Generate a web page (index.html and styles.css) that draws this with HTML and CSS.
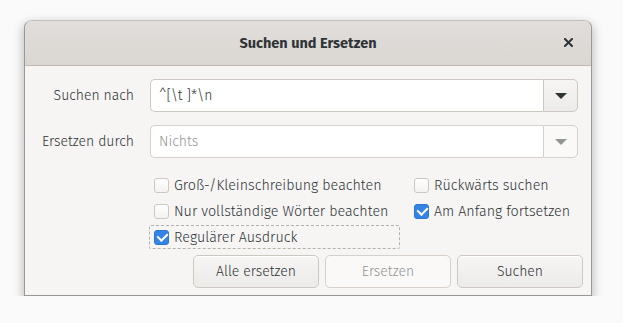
FILE: index.html
```html
<!DOCTYPE html>
<html lang="de">
<head>
  <meta charset="UTF-8">
  <title>Suchen und Ersetzen</title>
  <link rel="stylesheet" href="styles.css">
</head>
<body>
  <div class="dialog">
    <header class="titlebar">
      <h1>Suchen und Ersetzen</h1>
      <button class="close-btn" aria-label="Schließen">
        <svg width="9" height="9" viewBox="0 0 9 9"><path d="M1 1L8 8M8 1L1 8" stroke="#2e3436" stroke-width="2" stroke-linecap="square"/></svg>
      </button>
    </header>

    <div class="content">
      <div class="fields">
        <label class="field-label">Suchen nach</label>
        <div class="combo">
          <input type="text" value="^[\t ]*\n">
          <button class="combo-btn">
            <svg width="12" height="6" viewBox="0 0 12 6"><path d="M0 0H12L6 6Z" fill="#2e3436"/></svg>
          </button>
        </div>

        <label class="field-label">Ersetzen durch</label>
        <div class="combo disabled">
          <input type="text" placeholder="Nichts" disabled>
          <button class="combo-btn" disabled>
            <svg width="12" height="6" viewBox="0 0 12 6"><path d="M0 0H12L6 6Z" fill="#929595"/></svg>
          </button>
        </div>
      </div>

      <div class="options">
        <label class="check"><span class="box"></span>Groß-/Kleinschreibung beachten</label>
        <label class="check"><span class="box"></span>Rückwärts suchen</label>
        <label class="check"><span class="box"></span>Nur vollständige Wörter beachten</label>
        <label class="check"><span class="box checked"></span>Am Anfang fortsetzen</label>
        <label class="check focused"><span class="box checked"></span>Regulärer Ausdruck</label>
      </div>

      <div class="actions">
        <button class="btn">Alle ersetzen</button>
        <button class="btn" disabled>Ersetzen</button>
        <button class="btn">Suchen</button>
      </div>
    </div>
  </div>
</body>
</html>
```

FILE: styles.css
```css
* {
  margin: 0;
  padding: 0;
  box-sizing: border-box;
  font-family: 'Fira Sans', 'Noto Sans', sans-serif;
  font-weight: 350;
}

body {
  background-color: #fafafa;
  color: #2e3436;
  font-size: 14px;
}

.dialog {
  margin: 20px 0 0 24px;
  width: 568px;
  height: 276px;
  background-color: #f6f5f4;
  border: 1px solid #9a9896;
  border-top-color: #c4c0bc;
  border-radius: 8px 8px 0 0;
  box-shadow: 0 4px 10px 2px rgba(0, 0, 0, 0.22);
  display: flex;
  flex-direction: column;
}

.titlebar {
  height: 45px;
  flex-shrink: 0;
  background: linear-gradient(#e1dedb, #dad6d2);
  border-bottom: 1px solid #bfb8b1;
  border-radius: 7px 7px 0 0;
  display: flex;
  align-items: center;
  justify-content: center;
  position: relative;
}

.titlebar h1 {
  font-size: 14.5px;
  font-weight: 700;
  color: #2e3436;
}

.close-btn {
  position: absolute;
  right: 18px;
  top: 17px;
  border: none;
  background: none;
  display: flex;
}

.content {
  padding: 13px 8px 0 12px;
  display: flex;
  flex-direction: column;
}

.fields {
  display: grid;
  grid-template-columns: 97px 1fr;
  column-gap: 16px;
  row-gap: 13px;
  margin-right: 5px;
}

.field-label {
  text-align: right;
  align-self: center;
  white-space: nowrap;
}

.combo {
  display: flex;
  height: 33px;
}

.combo input {
  flex: 1;
  min-width: 0;
  border: 1px solid #cdc7c2;
  border-right: none;
  border-radius: 5px 0 0 5px;
  background: #fff;
  padding: 0 8px;
  font-size: 14px;
  color: #2e3436;
  outline: none;
}

.combo input::placeholder {
  color: #929595;
}

.combo-btn {
  width: 35px;
  border: 1px solid #cdc7c2;
  border-radius: 0 5px 5px 0;
  background: linear-gradient(#f6f5f4, #edebe9);
  display: flex;
  align-items: center;
  justify-content: center;
}

.combo.disabled .combo-btn {
  background: #faf9f8;
  border-color: #d5d0cc;
}

.combo.disabled input {
  border-color: #d5d0cc;
}

.options {
  display: grid;
  grid-template-columns: 260px auto;
  row-gap: 2px;
  margin: 15px 0 0 112px;
}

.check {
  display: flex;
  align-items: center;
  gap: 5px;
  height: 24px;
  padding: 0 4px;
  font-size: 14.3px;
  white-space: nowrap;
  border: 1px solid transparent;
}

.check.focused {
  border: 1px dashed #b4b0ac;
  border-radius: 2px;
  width: 251px;
}

.box {
  width: 15px;
  height: 15px;
  border: 1px solid #cdc7c2;
  border-radius: 3px;
  background: linear-gradient(#ffffff, #f4f2f1);
  flex-shrink: 0;
  position: relative;
}

.box.checked {
  background: #3584e4;
  border-color: #2a76d6;
}

.box.checked::after {
  content: '';
  position: absolute;
  left: 3.5px;
  top: 0.5px;
  width: 5px;
  height: 8px;
  border: solid #fff;
  border-width: 0 2.5px 2.5px 0;
  transform: rotate(45deg);
}

.actions {
  display: flex;
  justify-content: flex-end;
  gap: 6px;
  margin-top: 6px;
}

.btn {
  width: 126px;
  height: 33px;
  border: 1px solid #cdc7c2;
  border-radius: 5px;
  background: linear-gradient(#f6f5f4, #edebe9);
  font-size: 14px;
  color: #2e3436;
  box-shadow: inset 0 1px #fff;
}

.btn:disabled {
  background: #faf9f8;
  border-color: #d5d0cc;
  color: #929595;
  box-shadow: none;
}
```
